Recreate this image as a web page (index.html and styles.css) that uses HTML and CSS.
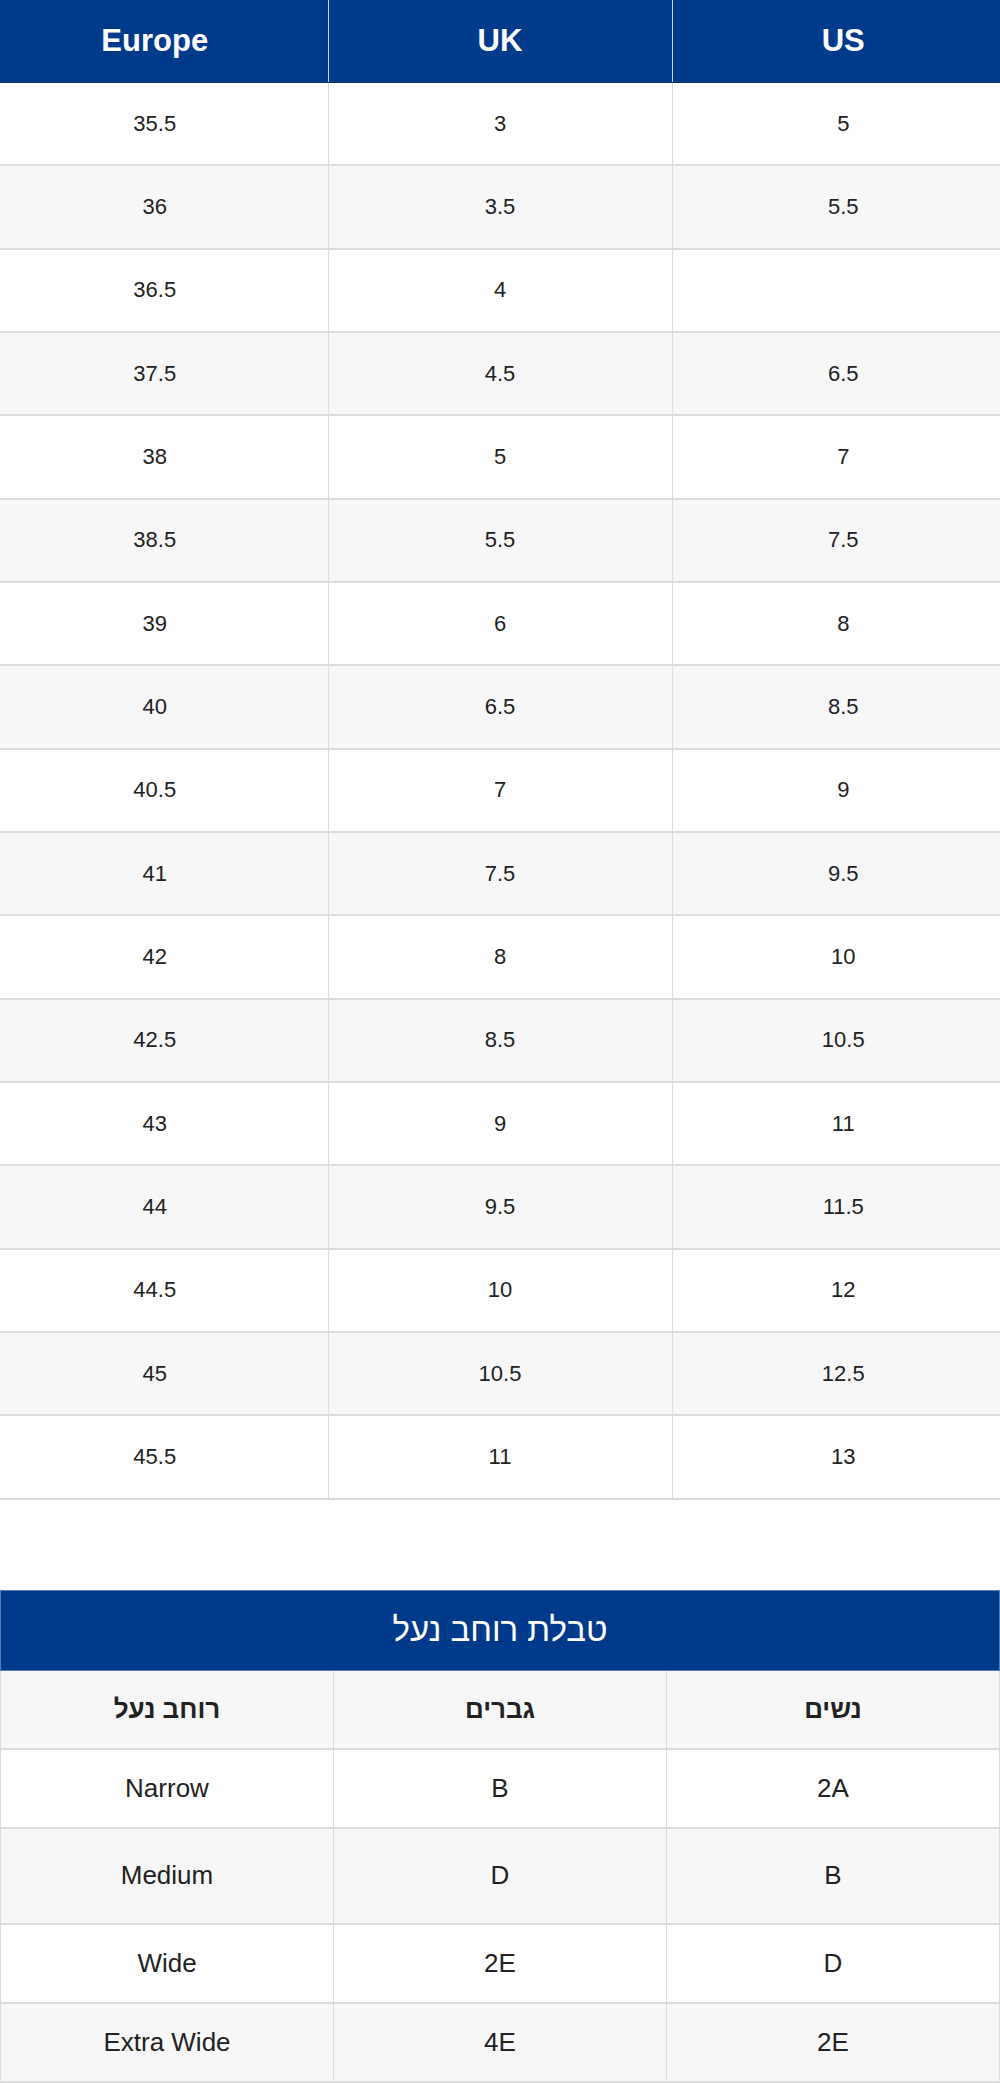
FILE: index.html
```html
<!DOCTYPE html>
<html lang="he">
<head>
<meta charset="utf-8">
<title>Size chart</title>
<link rel="stylesheet" href="styles.css">
</head>
<body>
<table class="sizes">
  <colgroup><col class="c1"><col class="c2"><col class="c3"></colgroup>
  <thead>
    <tr><th>Europe</th><th>UK</th><th>US</th></tr>
  </thead>
  <tbody>
    <tr><td>35.5</td><td>3</td><td>5</td></tr>
    <tr><td>36</td><td>3.5</td><td>5.5</td></tr>
    <tr><td>36.5</td><td>4</td><td></td></tr>
    <tr><td>37.5</td><td>4.5</td><td>6.5</td></tr>
    <tr><td>38</td><td>5</td><td>7</td></tr>
    <tr><td>38.5</td><td>5.5</td><td>7.5</td></tr>
    <tr><td>39</td><td>6</td><td>8</td></tr>
    <tr><td>40</td><td>6.5</td><td>8.5</td></tr>
    <tr><td>40.5</td><td>7</td><td>9</td></tr>
    <tr><td>41</td><td>7.5</td><td>9.5</td></tr>
    <tr><td>42</td><td>8</td><td>10</td></tr>
    <tr><td>42.5</td><td>8.5</td><td>10.5</td></tr>
    <tr><td>43</td><td>9</td><td>11</td></tr>
    <tr><td>44</td><td>9.5</td><td>11.5</td></tr>
    <tr><td>44.5</td><td>10</td><td>12</td></tr>
    <tr><td>45</td><td>10.5</td><td>12.5</td></tr>
    <tr><td>45.5</td><td>11</td><td>13</td></tr>
  </tbody>
</table>

<table class="widths">
  <thead>
    <tr class="title"><th colspan="3" dir="rtl">טבלת רוחב נעל</th></tr>
    <tr class="head"><th dir="rtl">רוחב נעל</th><th dir="rtl">גברים</th><th dir="rtl">נשים</th></tr>
  </thead>
  <tbody>
    <tr><td>Narrow</td><td>B</td><td>2A</td></tr>
    <tr class="tall"><td>Medium</td><td>D</td><td>B</td></tr>
    <tr><td>Wide</td><td>2E</td><td>D</td></tr>
    <tr><td>Extra Wide</td><td>4E</td><td>2E</td></tr>
  </tbody>
</table>
</body>
</html>
```

FILE: styles.css
```css
html, body {
  margin: 0;
  padding: 0;
  background: #ffffff;
}

body {
  font-family: "Liberation Sans", Arial, "Noto Sans", sans-serif;
  color: #222222;
}

table {
  width: 1000px;
  border-collapse: collapse;
  table-layout: fixed;
}

.sizes .c1 { width: 328px; }
.sizes .c2 { width: 344px; }
.sizes .c3 { width: 328px; }

.sizes th {
  background: #003a8b;
  color: #ffffff;
  font-size: 31px;
  font-weight: 700;
  height: 82px;
  padding: 0;
  text-align: center;
  border-left: 1px solid #c9d3e6;
  border-bottom: 1px solid #0a2e6e;
}

.sizes td {
  height: 81.33px;
  padding: 0;
  text-align: center;
  font-size: 22px;
  color: #222222;
  border-bottom: 2px solid #dcdcdc;
  border-left: 1px solid #dcdcdc;
}

.sizes th:first-child,
.sizes td:first-child {
  border-left: none;
  padding-right: 18px;
}

.sizes th:last-child,
.sizes td:last-child {
  padding-left: 14px;
}

.sizes tbody tr:nth-child(even) td { background: #f7f7f7; }

.widths {
  margin-top: 90px;
  border: 1px solid #dcdcdc;
}

.widths .title th {
  background: #003a8b;
  color: #ffffff;
  font-size: 33px;
  font-weight: 400;
  height: 79px;
  padding: 0;
  border: 1px solid #5b7bb5;
}

.widths .head th {
  background: #f7f7f7;
  font-size: 26px;
  font-weight: 700;
  color: #222222;
  height: 77px;
  padding: 0;
  border: 1px solid #dcdcdc;
  border-bottom-width: 2px;
}

.widths td {
  height: 77px;
  padding: 0;
  text-align: center;
  font-size: 26px;
  color: #222222;
  border: 1px solid #dcdcdc;
  border-bottom-width: 2px;
}

.widths tbody tr:nth-child(even) td { background: #f7f7f7; }

.widths tbody tr.tall td { height: 94px; }
```
